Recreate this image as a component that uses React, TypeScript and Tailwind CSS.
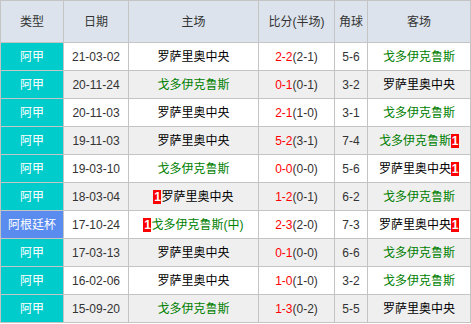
import React from 'react'

type Team = 'r' | 'g'

interface Match {
  type: string
  cup?: boolean
  date: string
  home: Team
  homeSuffix?: string
  homeRed?: number
  score: string
  half: string
  corner: string
  away: Team
  awayRed?: number
}

const names: Record<Team, string> = { r: '罗萨里奥中央', g: '戈多伊克鲁斯' }

const matches: Match[] = [
  { type: '阿甲', date: '21-03-02', home: 'r', score: '2-2', half: '(2-1)', corner: '5-6', away: 'g' },
  { type: '阿甲', date: '20-11-24', home: 'g', score: '0-1', half: '(0-1)', corner: '3-2', away: 'r' },
  { type: '阿甲', date: '20-11-03', home: 'r', score: '2-1', half: '(1-0)', corner: '3-1', away: 'g' },
  { type: '阿甲', date: '19-11-03', home: 'r', score: '5-2', half: '(3-1)', corner: '7-4', away: 'g', awayRed: 1 },
  { type: '阿甲', date: '19-03-10', home: 'g', score: '0-0', half: '(0-0)', corner: '5-6', away: 'r', awayRed: 1 },
  { type: '阿甲', date: '18-03-04', home: 'r', homeRed: 1, score: '1-2', half: '(0-1)', corner: '6-2', away: 'g' },
  { type: '阿根廷杯', cup: true, date: '17-10-24', home: 'g', homeSuffix: '(中)', homeRed: 1, score: '2-3', half: '(2-0)', corner: '7-3', away: 'r', awayRed: 1 },
  { type: '阿甲', date: '17-03-13', home: 'r', score: '0-1', half: '(0-0)', corner: '6-6', away: 'g' },
  { type: '阿甲', date: '16-02-06', home: 'r', score: '1-0', half: '(1-0)', corner: '3-2', away: 'g' },
  { type: '阿甲', date: '15-09-20', home: 'g', score: '1-3', half: '(0-2)', corner: '5-5', away: 'r' },
]

function RedCard({ n }: { n: number }) {
  return (
    <span className="inline-flex h-[14px] w-[8px] items-center justify-center bg-[#ff0000] text-[12px] font-bold leading-none text-white">
      {n}
    </span>
  )
}

function TeamName({ team, suffix }: { team: Team; suffix?: string }) {
  return (
    <span className={team === 'g' ? 'text-[#008000]' : 'text-black'}>
      {names[team]}
      {suffix}
    </span>
  )
}

const headers = ['类型', '日期', '主场', '比分(半场)', '角球', '客场']

export default function App() {
  return (
    <div
      className="grid w-[471px] grid-cols-[62px_64px_129px_75px_32px_102px] gap-px bg-[#c4c4c4] p-px text-[12px] text-[#333]"
      style={{ fontFamily: '"Liberation Sans", "Noto Sans CJK SC", sans-serif' }}
    >
      {headers.map(h => (
        <div key={h} className="flex h-[41px] items-center justify-center bg-[#dce3ec] text-[#333]">
          {h}
        </div>
      ))}
      {matches.map((m, i) => {
        const bg = i % 2 === 0 ? 'bg-white' : 'bg-[#efefef]'
        const cell = `flex h-[27px] items-center justify-center ${bg}`
        return (
          <React.Fragment key={m.date}>
            <div className={`flex h-[27px] items-center justify-center text-white ${m.cup ? 'bg-[#5a8cf0]' : 'bg-[#00cccc]'}`}>
              {m.type}
            </div>
            <div className={cell}>{m.date}</div>
            <div className={cell}>
              {m.homeRed ? <RedCard n={m.homeRed} /> : null}
              <TeamName team={m.home} suffix={m.homeSuffix} />
            </div>
            <div className={cell}>
              <span className="text-[#ff0000]">{m.score}</span>
              <span>{m.half}</span>
            </div>
            <div className={cell}>{m.corner}</div>
            <div className={cell}>
              <TeamName team={m.away} />
              {m.awayRed ? <RedCard n={m.awayRed} /> : null}
            </div>
          </React.Fragment>
        )
      })}
    </div>
  )
}
